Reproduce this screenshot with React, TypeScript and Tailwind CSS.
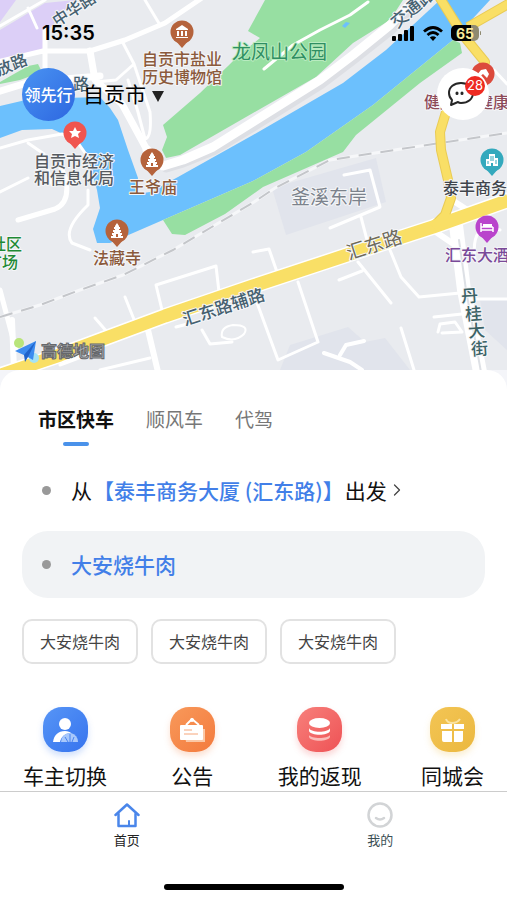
import { useState } from "react";
import { ChevronRight } from "lucide-react";

const LABEL_FONT = "font-['Noto_Sans_CJK_SC',sans-serif]";

interface PinProps {
  x: number;
  y: number;
  color: string;
  children: React.ReactNode;
}

function Pin({ x, y, color, children }: PinProps) {
  return (
    <g transform={`translate(${x} ${y})`}>
      <path d="M-7 8 L0 16 L7 8Z" fill={color} />
      <circle r="11.5" fill={color} />
      {children}
    </g>
  );
}

function Pagoda() {
  return (
    <path
      d="M0 -8L2 -5V-4H3V-2H2V-1H4V1H3V2H5V4H4V5H6V7H-6V5H-4V4H-5V2H-3V1H-4V-1H-2V-2H-3V-4H-2V-5Z M-1 3V6H1V3Z"
      fill="#fff"
      fillRule="evenodd"
    />
  );
}

function MapLabels() {
  return (
    <g
      fontSize="16"
      fontWeight="500"
      paintOrder="stroke"
      stroke="#f5f6f8"
      strokeWidth="2"
      strokeLinejoin="round"
    >
      <g fill="#8b5a3c" textAnchor="middle">
        <text x="182" y="65">自贡市盐业</text>
        <text x="182" y="83">历史博物馆</text>
        <text x="153" y="193">王爷庙</text>
        <text x="117" y="264">法藏寺</text>
      </g>
      <g fill="#555a60">
        <text x="34" y="167">自贡市经济</text>
        <text x="34" y="184">和信息化局</text>
      </g>
      <g fill="#1f8a35">
        <text x="-10" y="250">社区</text>
        <text x="-14" y="268">广场</text>
      </g>
      <text x="232" y="59" fontSize="19" fontWeight="400" fill="#2f8f62" stroke="#b9ebc0">龙凤山公园</text>
      <text x="291" y="204" fontSize="19" fontWeight="400" fill="#7b828c">釜溪东岸</text>
      <text x="443" y="194" fill="#3f444b">泰丰商务大厦</text>
      <text x="445" y="261" fill="#7a4a98">汇东大酒店</text>
      <g fill="#8d4a58">
        <text x="424" y="108">健康</text>
        <text x="477" y="108">健康</text>
      </g>
      <g fill="#466170">
        <text transform="translate(57 27) rotate(-33)">中华路</text>
        <text transform="translate(-16 82) rotate(-22)">解放路</text>
        <text x="73" y="90">路</text>
        <text fontSize="17" transform="translate(397 29) rotate(-40)">交通路</text>
        <text fontSize="17" transform="translate(185 326) rotate(-18)">汇东路辅路</text>
      </g>
      <text fontSize="19" fill="#6d6a5c" fontWeight="400" transform="translate(349 260) rotate(-18)">汇东路</text>
      <g fill="#3b6265" fontSize="17" textAnchor="middle">
        <text transform="translate(470 302) rotate(-4)">丹</text>
        <text transform="translate(474 320) rotate(-4)">桂</text>
        <text transform="translate(477 337) rotate(-4)">大</text>
        <text transform="translate(480 355) rotate(-4)">街</text>
      </g>
    </g>
  );
}

function CityMap() {
  return (
    <svg
      viewBox="0 0 507 370"
      preserveAspectRatio="xMidYMid slice"
      className={`absolute inset-0 h-full w-full ${LABEL_FONT}`}
      role="img"
      aria-label="地图"
    >
      <rect width="507" height="370" fill="#e9ebef" />

      {/* districts */}
      <path d="M0 0H16L0 22Z M0 30L45 3L75 0L48 30L43 50L0 62Z" fill="#dccff7" />
      <path d="M272 188L376 158L386 202L286 235Z M280 370L290 345L348 327L365 342L385 338L410 370Z M480 300H507V350L485 330Z" fill="#e1e4ec" />

      {/* river and parks */}
      <path d="M0 82L28 66L38 64L42 72L20 80L0 84Z" fill="#9adfa5" />
      <path
        d="M0 106L30 99L100 97L110 108L118 120L128 150L138 178L136 194L150 192L178 177L253 135L343 83L386 50L440 0H490L453 40L373 105L306 152L253 181L163 220L110 243L97 243L93 229L100 208L97 190L88 158L76 140L52 129L22 130L0 138Z"
        fill="#6cc0fd"
      />
      <path d="M163 220L253 181L306 152L373 105L453 40L460 43L462 53L420 83L356 135L343 152L263 187L225 214L185 235L172 234Z" fill="#97dfa2" />
      <path d="M163 125L200 93L228 66L238 56L260 38L248 31L265 0H403L390 20L353 43L316 77L253 113L180 155L166 158L162 150L167 137Z" fill="#97dfa2" />
      <path d="M342 26L346 22L350 23L345 28Z" fill="#6cc0fd" />

      {/* minor roads */}
      <g fill="none" stroke="#fff" strokeWidth="3" strokeLinecap="round" strokeLinejoin="round">
        <path d="M0 26L45 0M28 8L37 28M264 69L293 45L320 30L350 15L368 2" />
        <path d="M122 41L134 64L150 112Q152 138 145 139L138 112L128 80M134 64L116 80L96 82M160 25L145 0" />
        <path d="M0 148L28 140L62 134L76 140L90 160M88 190L88 205Q62 230 72 243L90 250" />
        <path d="M28 143L44 154L52 185M0 192L28 178" />
        <path d="M344 175L370 170L380 207L330 228M361 217L367 240" />
        <path d="M162 310L156 285L216 266L219 292M135 322L125 297M108 333L95 318" />
        <path d="M60 365L100 350M100 370L150 358M176 327L195 322M202 330L210 344L232 342" />
        <path d="M222 337Q220 327 233 325Q250 325 244 334Q235 343 222 337Z" strokeWidth="2" />
        <path d="M253 252L269 249L277 272M298 282L318 342L278 360L256 300M358 262L391 303M339 280L362 271M390 250L401 277L419 297L460 293M434 317L462 314M438 332L440 324L455 322L462 332L442 333M401 328L414 370" />
        <path d="M475 299H507M500 230Q470 220 475 260M494 70L507 84" />
        <path d="M324 353L350 362L362 370M340 355L346 345L364 341" strokeWidth="4" />
        <path d="M18 220L55 209Q70 203 66 180L58 160M0 290L16 350" strokeWidth="5" />
      </g>

      {/* main roads */}
      <g fill="none" strokeLinejoin="round" strokeLinecap="round">
        <path d="M166 167L183 162L213 150L253 126L320 84L353 59L390 30L418 2" stroke="#dddfe4" strokeWidth="11" />
        <g stroke="#fff">
          <path d="M-3 62L43 51H90L125 40L165 23L202 -2M45 30V72" strokeWidth="5" />
          <path d="M-3 92L30 82L100 76M90 51L95 80L122 104L147 150" strokeWidth="7" />
          <path d="M147 150L163 166L183 160L213 147L253 122L320 80L353 55L390 25L416 -2" strokeWidth="9" />
          <path d="M456 225L464 290L480 372" strokeWidth="14" />
          <path d="M433 230L452 243M452 200L475 215M148 330L158 372M12 320L14 370" strokeWidth="6" />
        </g>
        <path d="M459 240L466 290L481 372" stroke="#dde0e5" strokeWidth="2" />
      </g>

      {/* railway */}
      <g fill="none">
        <path d="M0 317L40 305L80 290L123 275L173 250L254 202L275 188L330 160L440 143L507 133" stroke="#f6f7f9" strokeWidth="3" />
        <path d="M0 317L40 305L80 290L123 275L173 250L254 202L275 188L330 160L440 143L507 133" stroke="#c4c6ca" strokeWidth="2" strokeDasharray="13 9" />
      </g>

      {/* arterials */}
      <g fill="none" strokeLinejoin="round">
        <path d="M-5 377L60 355L165 316L253 286L353 253L433 227L512 199" stroke="#fff" strokeWidth="16" />
        <path d="M438 -5L463 35L485 62L478 84L446 112L440 132L441 150L448 180L451 198L445 215L433 227M468 27L510 3" stroke="#e9cb55" strokeWidth="10" />
        <g stroke="#f9df66">
          <path d="M-5 377L60 355L165 316L253 286L353 253L433 227L512 199" strokeWidth="13" />
          <path d="M438 -5L463 35L485 62L478 84L446 112L440 132L441 150L448 180L451 198L445 215L433 227M468 27L510 3" strokeWidth="8" />
        </g>
      </g>

      <MapLabels />

      <Pin x={182} y={32} color="#b5633c">
        <path d="M0 -7L6 -3V-2H-6V-3Z M-5 -1H-3V4H-5Z M-1 -1H1V4H-1Z M3 -1H5V4H3Z M-6 5H6V6H-6Z" fill="#fff" />
      </Pin>
      <Pin x={152} y={160} color="#b5633c"><Pagoda /></Pin>
      <Pin x={117} y={231} color="#b5633c"><Pagoda /></Pin>
      <Pin x={75} y={133} color="#f0554f">
        <path d="M0 -6L2 -2L6 -2L3 1L4 5L0 3L-4 5L-3 1L-6 -2L-2 -2Z" fill="#fff" />
      </Pin>
      <Pin x={492} y={160} color="#34a9bd">
        <path d="M-6 -1H-3V-6H3V-2H6V6H1V3H-1V6H-6Z" fill="#fff" />
        <path d="M-1 -4V1M1 -4V1M-4 1V4M4 0V4" stroke="#34a9bd" />
      </Pin>
      <Pin x={487} y={227} color="#b944cc">
        <path d="M-6 -4V5M-6 3H6M6 0V5M-6 0H6" stroke="#fff" strokeWidth="1.5" fill="none" />
        <path d="M-4 -3H5V0H-4Z" fill="#fff" />
      </Pin>
      <Pin x={483} y={74} color="#dc4a3c">
        <path d="M-7 2L-2 -4L3 -5L6 0L4 4L0 0L-4 3Z" fill="#fff" />
      </Pin>

      {/* provider mark */}
      <circle cx="19" cy="343" r="5" fill="#b9e57b" />
      <circle cx="34" cy="358" r="5" fill="#a5e3f5" />
      <path d="M15 351L36 341L33 360L26 356Z" fill="#3c8cf0" />
      <path d="M36 341L24 355L25 362L28 357Z" fill="#1f62c9" />
      <text x="41" y="357" fontSize="16" fontWeight="700" fill="#b4b6b9" stroke="#66686c" strokeWidth="1">高德地图</text>
    </svg>
  );
}

function StatusBar() {
  return (
    <div className="flex h-[66px] items-center justify-between pr-[26px] pl-[42px]">
      <span className="font-['Inter',sans-serif] text-xl font-semibold text-black">15:35</span>
      <div className="flex items-center gap-2">
        <svg width="23" height="15" viewBox="0 0 23 15" aria-hidden="true">
          <rect x="0" y="10" width="4" height="5" rx="1" />
          <rect x="6" y="8" width="4" height="7" rx="1" />
          <rect x="12" y="4" width="4" height="11" rx="1" />
          <rect x="18" y="0" width="4" height="15" rx="1" />
        </svg>
        <svg width="20" height="15" viewBox="0 0 20 15" fill="none" stroke="#000" strokeWidth="2.800" aria-hidden="true">
          <path d="M1 5.500Q10 -2.500 19 5.500" />
          <path d="M4.500 9Q10 4 15.500 9" />
          <path d="M10 15L6.800 11.600Q10 9 13.200 11.600Z" fill="#000" stroke="none" />
        </svg>
        <div className="flex items-center gap-px">
          <span className="flex h-4 w-7 items-center justify-center rounded-[5px] bg-linear-to-r from-black from-70% to-[#8f8a70] to-70% font-['Inter',sans-serif] text-[14px] font-bold text-[#fbec9a]">
            65
          </span>
          <span className="h-1 w-px rounded bg-[#8f8a70]" />
        </div>
      </div>
    </div>
  );
}

function MapHeader() {
  return (
    <header className="relative h-[370px] overflow-hidden">
      <CityMap />
      <div className="relative">
        <StatusBar />
        <div className="flex h-14 items-center px-[18px]">
          <div className="ml-1 flex size-[53px] items-center justify-center rounded-full bg-linear-to-br from-[#4a93f2] to-[#2e66e0] text-base font-medium text-white">
            领先行
          </div>
          <button className="ml-2 flex items-center gap-[6px] text-[21px] text-black">
            自贡市
            <svg width="12" height="11" viewBox="0 0 12 11" className="mt-1" aria-hidden="true">
              <path d="M0 0H12L6 11Z" fill="#222" />
            </svg>
          </button>
          <button aria-label="消息 28" className="relative ml-auto flex size-[52px] items-center justify-center rounded-full bg-white pr-1">
            <svg width="28" height="26" viewBox="0 0 28 26" fill="none" stroke="#262626" strokeWidth="2" strokeLinejoin="round" strokeLinecap="round" aria-hidden="true">
              <path d="M14 2C7 2 2 6 2 12C2 15 3 17 5 19L4 24L11 21C12 22 13 22 14 22C21 22 26 18 26 12C26 6 21 2 14 2Z" />
              <path d="M10 12V12.500M15 12V12.500" strokeWidth="3" />
            </svg>
            <span className="absolute top-2 right-1 flex size-5 items-center justify-center rounded-full bg-[#ee2a22] font-['Inter',sans-serif] text-[13px] text-white">
              28
            </span>
          </button>
        </div>
      </div>
    </header>
  );
}

const tabs = ["市区快车", "顺风车", "代驾"];
const suggestions = ["大安烧牛肉", "大安烧牛肉", "大安烧牛肉"];

const services = [
  {
    label: "车主切换",
    tile: "from-[#5795f6] to-[#3673ee] shadow-[0_4px_6px_#4a86f440]",
    icon: (
      <>
        <circle cx="22" cy="17" r="6" fill="#fff" />
        <path d="M10 35C11 28 15 24 22 24C25 24 27 25 28 26C22 26 18 30 17 35Z" fill="#fff" />
        <path d="M18 35A9 9 0 0 1 28 26A9 9 0 0 1 35 35Z" fill="#a8c8fb" />
        <path d="M22 30L25 35M27 27V35M31 30L29 35" stroke="#4a84f0" strokeWidth="1" />
      </>
    ),
  },
  {
    label: "公告",
    tile: "from-[#f8995a] to-[#f37a3d] shadow-[0_4px_6px_#f5854840]",
    icon: (
      <>
        <path d="M14 22H35V35H16Z" fill="#fbc8a6" />
        <path d="M16 18L22 12L29 18" fill="none" stroke="#fff" strokeWidth="2" />
        <circle cx="22" cy="13" r="2" fill="#fff" />
        <rect x="10" y="18" width="23" height="15" rx="1" fill="#fff" />
        <path d="M14 23H22M14 27H28" stroke="#f6a67a" strokeWidth="1" />
      </>
    ),
  },
  {
    label: "我的返现",
    tile: "from-[#f77f7b] to-[#ee5155] shadow-[0_4px_6px_#f1606040]",
    icon: (
      <>
        <path d="M12 28C14 32 31 32 33 28V30C31 35 14 35 12 30Z" fill="#fbbcb9" />
        <path d="M12 21C14 26 31 26 33 21V24C31 29 14 29 12 24Z" fill="#fff" />
        <ellipse cx="22.500" cy="16" rx="10.500" ry="5" fill="#fff" />
      </>
    ),
  },
  {
    label: "同城会",
    tile: "from-[#f3c554] to-[#ebb83f] shadow-[0_4px_6px_#efbe4a40]",
    icon: (
      <>
        <path d="M16 12C17 15 20 16 22 16C25 16 28 15 30 12" fill="none" stroke="#fae3a2" strokeWidth="2" />
        <path d="M11 17H22V22H11ZM24 17H34V22H24ZM12 24H22V35H14Q12 35 12 33ZM24 24H33V33Q33 35 31 35H24Z" fill="#fff" />
      </>
    ),
  },
];

function HomeIcon() {
  return (
    <svg width="26" height="26" viewBox="0 0 26 26" fill="none" stroke="#4a86ea" strokeWidth="2.500" strokeLinejoin="round" strokeLinecap="round" aria-hidden="true">
      <path d="M1.500 13L13 2.500L24.500 13" />
      <path d="M4.500 12V24H21.500V12" />
      <path d="M15 19V23" strokeWidth="2" />
    </svg>
  );
}

function SmileIcon() {
  return (
    <svg width="26" height="26" viewBox="0 0 26 26" fill="none" stroke="#d2d4d6" strokeWidth="2.500" strokeLinecap="round" aria-hidden="true">
      <circle cx="13" cy="13" r="11.500" />
      <path d="M9 16Q13 19 17 16" />
    </svg>
  );
}

export default function App() {
  const [activeTab, setActiveTab] = useState(0);

  return (
    <div className={`flex min-h-screen flex-col bg-[#f4f5f9] ${LABEL_FONT}`}>
      <MapHeader />

      <main className="flex-1 rounded-t-[20px] bg-white">
        <div className="flex gap-8 px-[38px] pt-[34px]">
          {tabs.map((tab, i) => (
            <button
              key={tab}
              onClick={() => setActiveTab(i)}
              className={`flex flex-col items-center gap-2 text-[19px] leading-[30px] ${
                i === activeTab ? "font-bold text-[#111]" : "text-[#777]"
              }`}
            >
              {tab}
              {i === activeTab && <span className="h-1 w-[26px] rounded-sm bg-[#4a92ea]" />}
            </button>
          ))}
        </div>

        <button className="mt-7 flex h-8 items-center px-[42px] text-[21px] leading-8 text-[#111]">
          <span className="mr-5 size-[9px] rounded-full bg-[#999]" />
          从
          <span className="mx-px font-medium text-[#427fe8]">【泰丰商务大厦 (汇东路)】</span>
          <span>出发</span>
          <ChevronRight size={20} strokeWidth={1.5} className="text-[#444]" />
        </button>

        <div className="mt-[25px] px-[22px]">
          <button className="flex h-[67px] w-full items-center rounded-[26px] bg-[#f1f3f5] px-5 text-[21px] font-medium text-[#427fe8]">
            <span className="mr-5 size-[9px] rounded-full bg-[#999]" />
            大安烧牛肉
          </button>
          <div className="mt-[21px] flex gap-[13px]">
            {suggestions.map((name, i) => (
              <button key={i} className="h-[45px] w-[116px] rounded-[10px] border-2 border-[#e2e2e2] pb-[2px] text-base text-[#444]">
                {name}
              </button>
            ))}
          </div>
        </div>

        <div className="mt-[43px] flex justify-between px-[23px]">
          {services.map((item) => (
            <button key={item.label} className="flex min-w-[52px] flex-col items-center gap-2 text-[21px] leading-[30px] text-[#111]">
              <span className={`size-[45px] rounded-[19px] bg-linear-to-br ${item.tile}`}>
                <svg viewBox="0 0 45 45" aria-hidden="true">{item.icon}</svg>
              </span>
              {item.label}
            </button>
          ))}
        </div>
      </main>

      <nav className="border-t border-[#ccc] bg-white">
        <div className="grid grid-cols-2">
          <a href="#home" className="flex flex-col items-center gap-[2px] pt-[10px] text-[13px] leading-5 text-[#222]">
            <HomeIcon />
            首页
          </a>
          <a href="#me" className="flex flex-col items-center gap-[2px] pt-[10px] text-[13px] leading-5 text-[#3c5055]">
            <SmileIcon />
            我的
          </a>
        </div>
        <div className="mx-auto mt-[34px] mb-[10px] h-[6px] w-[180px] rounded-full bg-black" />
      </nav>
    </div>
  );
}
